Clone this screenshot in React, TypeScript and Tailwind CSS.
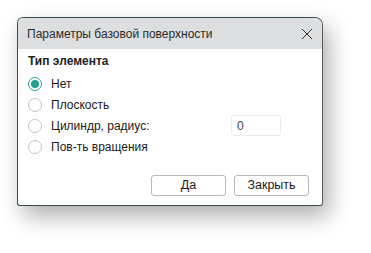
import { useState } from 'react';

const options = ['Нет', 'Плоскость', 'Цилиндр, радиус:', 'Пов-ть вращения'];

export default function App() {
  const [selected, setSelected] = useState(0);
  const [radius, setRadius] = useState('0');

  return (
    <div className="w-[371px] h-[253px] bg-white pt-[17px] pl-[17px]" style={{ fontFamily: '"Liberation Sans", Arial, sans-serif' }}>
      <div className="w-[306px] h-[189px] flex flex-col bg-white border border-[#3b4d4d] border-r-[#5a5a5a] rounded-tl-[6px] rounded-tr-[8px] rounded-b-[3px] shadow-[6px_10px_22px_rgba(0,0,0,0.32)] overflow-hidden">
        <div className="h-[31px] bg-[#dddedf] flex items-center justify-between pl-[9px] pr-[9px]">
          <span className="text-[12px] text-[#2b2b2b]">Параметры базовой поверхности</span>
          <svg width="12" height="12" viewBox="0 0 12 12" className="text-[#333]">
            <path d="M1 1L11 11M11 1L1 11" stroke="currentColor" strokeWidth="1" />
          </svg>
        </div>
        <div className="flex-1 flex flex-col pl-[10px] pr-[13px] pt-[4px]">
          <div className="text-[12px] font-bold text-[#222] h-[17px] leading-[17px]">Тип элемента</div>
          <div className="flex flex-col mt-[3px]">
            {options.map((o, i) => (
              <label key={o} className="flex items-center h-[21px] cursor-pointer" onClick={() => setSelected(i)}>
                <span
                  className={
                    'w-[14px] h-[14px] rounded-full border flex items-center justify-center ' +
                    (selected === i ? 'border-[#2a9d8f]' : 'border-[#c4c4c4]')
                  }
                >
                  {selected === i && <span className="w-[8px] h-[8px] rounded-full bg-[#2a9d8f]" />}
                </span>
                <span className="ml-[9px] text-[12px] text-[#1a1a1a]">{o}</span>
                {i === 2 && (
                  <input
                    value={radius}
                    onChange={(e) => setRadius(e.target.value)}
                    className="ml-auto mr-[28px] w-[50px] h-[21px] border border-[#ebebeb] rounded-[3px] px-[5px] text-[12px] text-[#444] outline-none"
                  />
                )}
              </label>
            ))}
          </div>
          <div className="flex justify-end gap-[8px] mt-auto mb-[9px]">
            <button className="w-[75px] h-[21px] border border-[#b8b8b8] rounded-[3px] text-[12.5px] text-[#1a1a1a] bg-white">Да</button>
            <button className="w-[75px] h-[21px] border border-[#b8b8b8] rounded-[3px] text-[12.5px] text-[#1a1a1a] bg-white">Закрыть</button>
          </div>
        </div>
      </div>
    </div>
  );
}
